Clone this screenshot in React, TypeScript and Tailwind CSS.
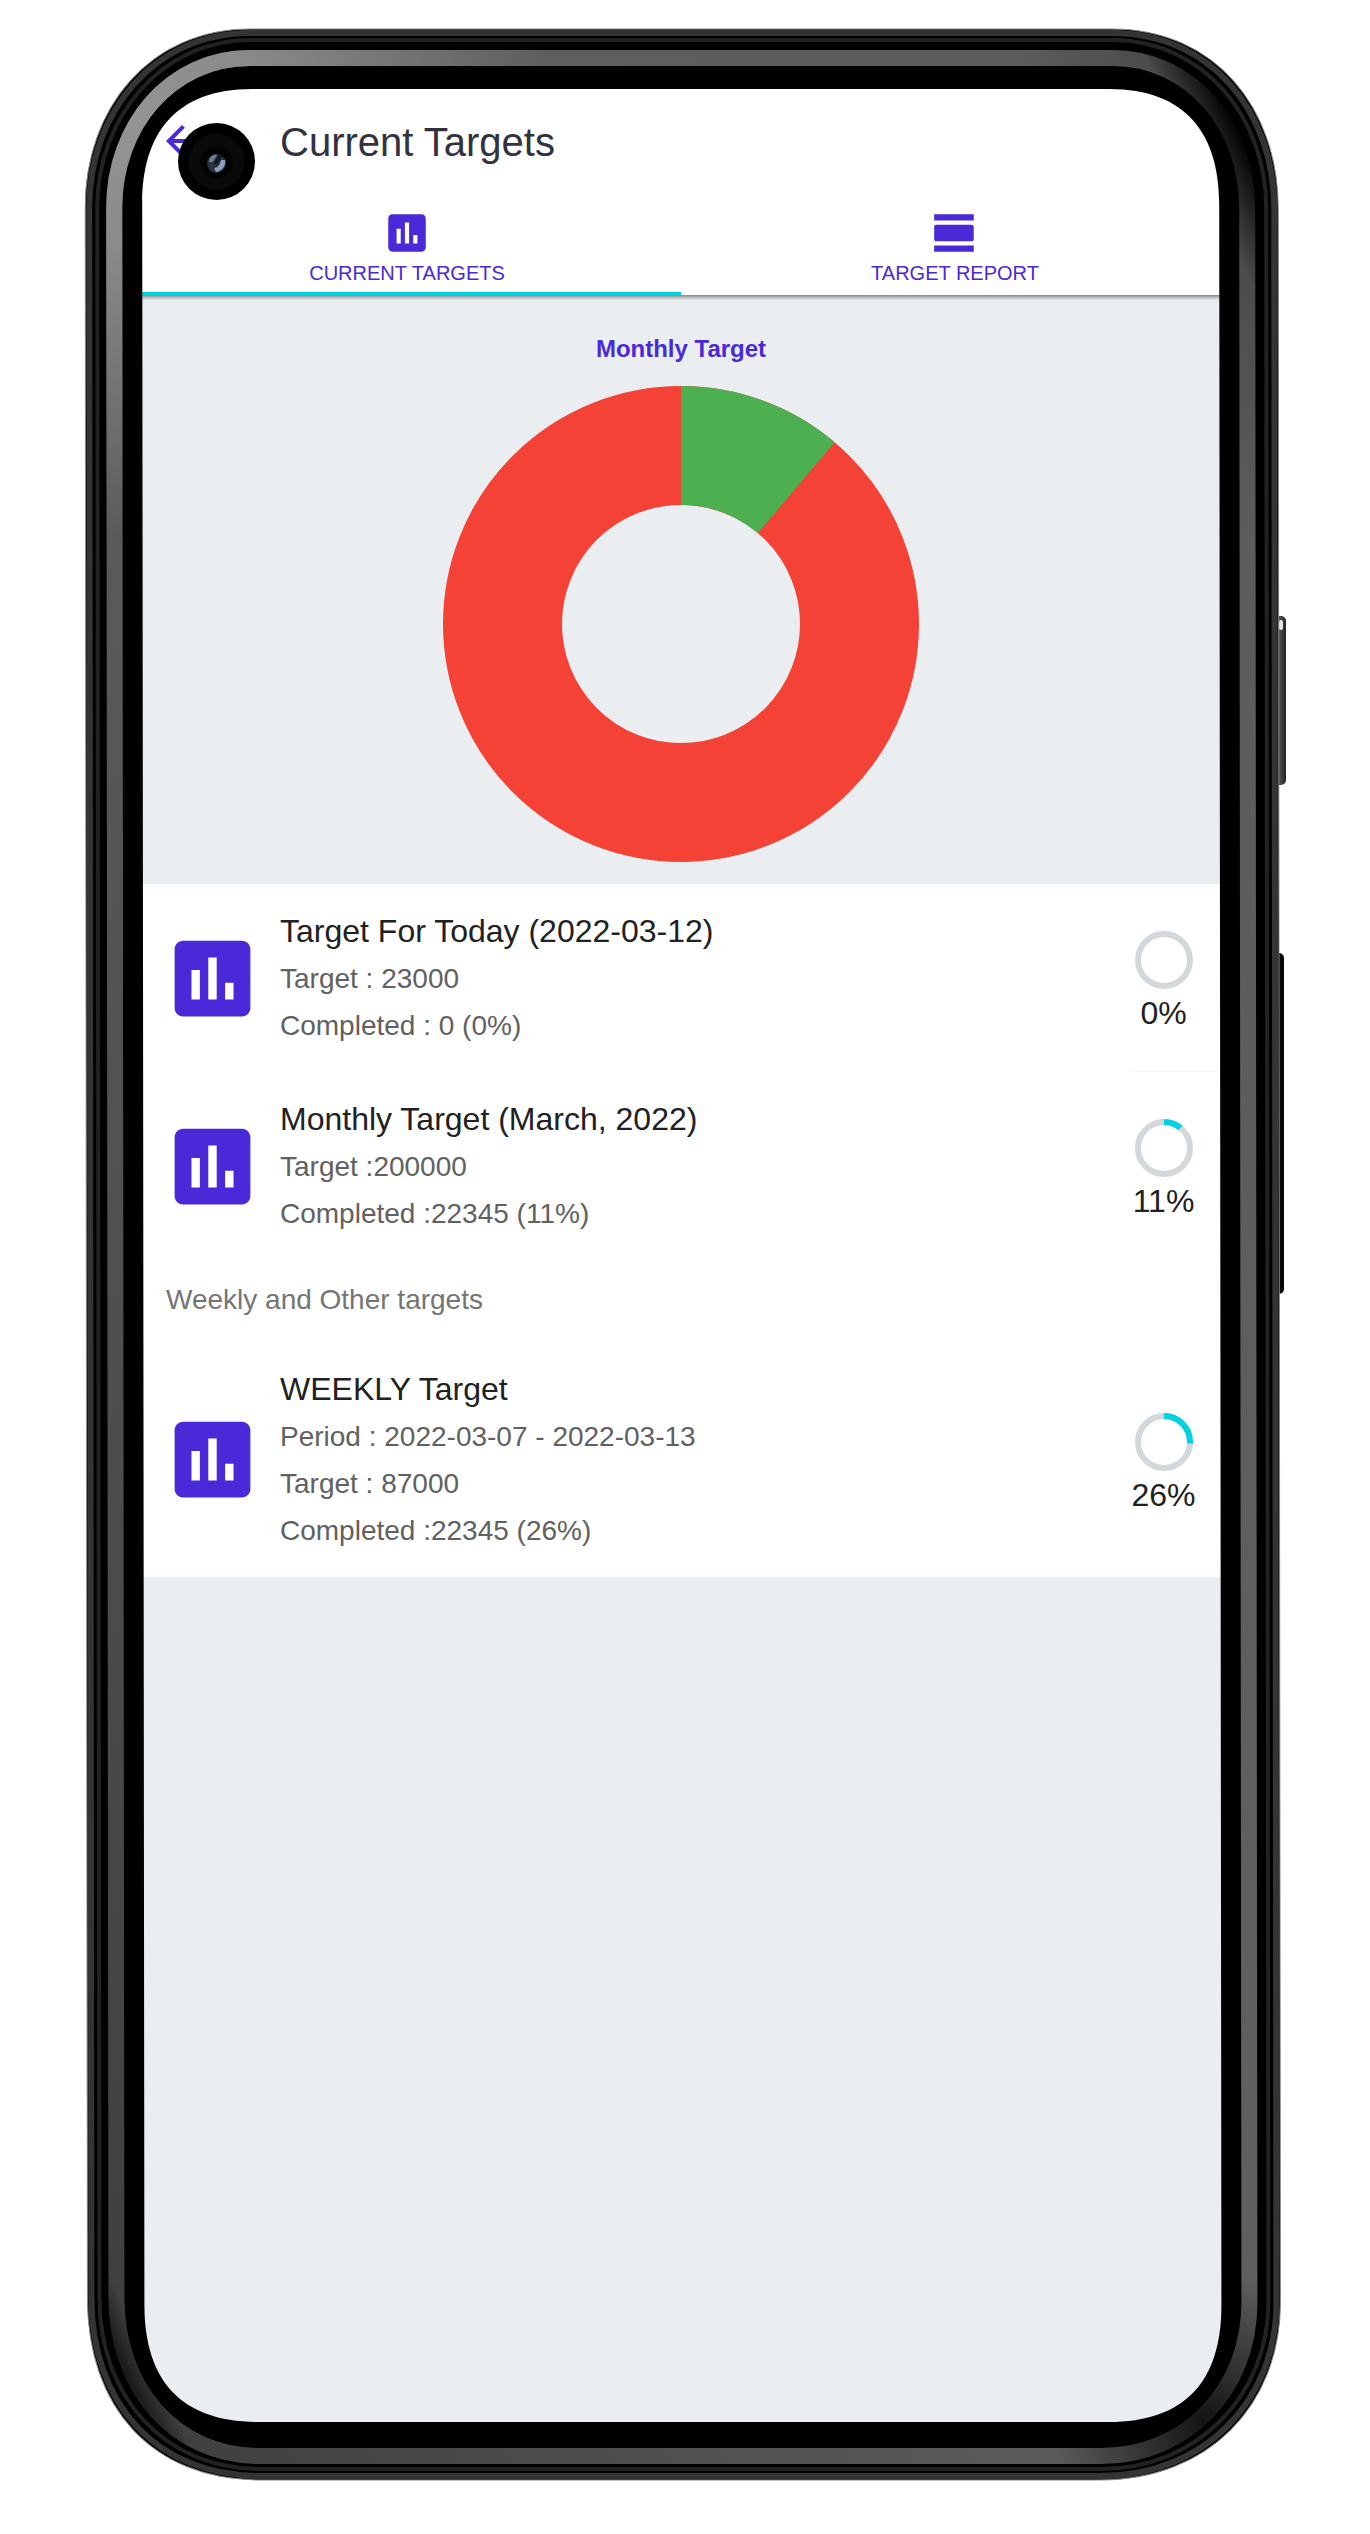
import React from "react";
import { MdArrowBack, MdInsertChart, MdViewDay } from "react-icons/md";

type Target = { title: string; lines: string[]; percent: number; divider?: boolean };

const dailyAndMonthly: Target[] = [
  {
    title: "Target For Today (2022-03-12)",
    lines: ["Target : 23000", "Completed : 0 (0%)"],
    percent: 0,
    divider: true,
  },
  {
    title: "Monthly Target (March, 2022)",
    lines: ["Target :200000", "Completed :22345 (11%)"],
    percent: 11,
  },
];

const weekly: Target[] = [
  {
    title: "WEEKLY Target",
    lines: ["Period : 2022-03-07 - 2022-03-13", "Target : 87000", "Completed :22345 (26%)"],
    percent: 26,
  },
];

function Ring({ percent }: { percent: number }) {
  return (
    <svg className="size-[58px]" viewBox="0 0 58 58" fill="none" strokeWidth="6" aria-hidden="true">
      <circle cx="29" cy="29" r="26" stroke="#d3d8dc" />
      {percent > 0 && (
        <circle
          cx="29"
          cy="29"
          r="26"
          stroke="#00d3e0"
          pathLength={100}
          strokeDasharray={`${percent} 100`}
          transform="rotate(-90 29 29)"
        />
      )}
    </svg>
  );
}

function TargetRow({ title, lines, percent, divider }: Target) {
  return (
    <li className="flex items-center pl-[29px]">
      <MdInsertChart className="size-[101px] shrink-0 text-[#4929d8]" aria-hidden="true" />
      <div className="min-w-0 flex-1 pt-6 pb-[23px] pl-[17px] leading-[47px]">
        <h2 className="text-[32px] text-[#212121]">{title}</h2>
        {lines.map((line) => (
          <p key={line} className="text-[28px] text-[#616161]">
            {line}
          </p>
        ))}
      </div>
      <div
        className={
          divider
            ? "flex w-[97px] shrink-0 items-center self-stretch border-b border-[#f3f4f5] pr-[34px]"
            : "flex w-[97px] shrink-0 items-center self-stretch pr-[34px]"
        }
      >
        <div className="flex w-full flex-col items-center pt-3">
          <Ring percent={percent} />
          <span className="text-[32px] leading-[48px] text-[#212121]">{percent}%</span>
        </div>
      </div>
    </li>
  );
}

function Donut() {
  return (
    <svg className="mt-[22px] size-[476px]" viewBox="0 0 476 476" role="img" aria-label="Monthly target, 11% completed">
      <circle cx="238" cy="238" r="178.5" fill="none" stroke="#f44336" strokeWidth="119" />
      <circle
        cx="238"
        cy="238"
        r="178.5"
        fill="none"
        stroke="#4caf50"
        strokeWidth="119"
        pathLength={100}
        strokeDasharray="11.17 100"
        transform="rotate(-90 238 238)"
      />
    </svg>
  );
}

/* Phone body: metal rim, glass reflection, bezel and side buttons around the display. */
function PhoneFrame() {
  return (
    <svg
      className="pointer-events-none absolute inset-0 h-full w-full"
      viewBox="0 0 1370 2534"
      preserveAspectRatio="none"
      aria-hidden="true"
    >
      <defs>
        <linearGradient id="band" x1="1" y1="0" x2="0" y2="1">
          <stop offset="0.018" stopColor="#000" />
          <stop offset="0.045" stopColor="#4c4c4c" />
          <stop offset="0.1" stopColor="#5c5c5c" />
          <stop offset="0.5" stopColor="#606060" />
          <stop offset="0.75" stopColor="#505050" />
          <stop offset="0.965" stopColor="#404040" />
          <stop offset="0.988" stopColor="#000" />
        </linearGradient>
        <radialGradient id="glow" gradientUnits="userSpaceOnUse" cx="130" cy="120" r="420">
          <stop offset="0" stopColor="#949494" />
          <stop offset="0.3" stopColor="#8a8a8a" />
          <stop offset="1" stopColor="#8a8a8a" stopOpacity="0" />
        </radialGradient>
        <radialGradient id="dim" gradientUnits="userSpaceOnUse" cx="1200" cy="2420" r="150">
          <stop offset="0" stopColor="#000" stopOpacity="0.8" />
          <stop offset="1" stopColor="#000" stopOpacity="0" />
        </radialGradient>
        <linearGradient id="power" x1="0" x2="1">
          <stop offset="0" stopColor="#222" />
          <stop offset="0.4" stopColor="#555" />
          <stop offset="1" stopColor="#222" />
        </linearGradient>
      </defs>
      <rect x="1274" y="616" width="12" height="169" rx="5" fill="url(#power)" />
      <rect x="1279" y="620" width="4" height="10" rx="2" fill="#dfe6ea" />
      <rect x="1274" y="953" width="10" height="341" rx="5" fill="#070707" />
      <g transform="skewX(0.06)" fill="none">
        <path
          fill="#000"
          fillRule="evenodd"
          d="M250 29H1112C1215 29 1278 108 1278 208V2302C1278 2406 1205 2480 1098 2480H258C150 2480 85 2408 85 2298V208C85 108 150 29 250 29ZM252 89C175 89 142 134 142 204V2305C142 2382 180 2422 256 2422H1106C1182 2422 1219 2382 1219 2305V204C1219 134 1186 89 1109 89Z"
        />
        <path
          stroke="#343434"
          strokeWidth="6"
          d="M250 33H1112C1211 33 1274 112 1274 208V2302C1274 2402 1201 2476 1098 2476H258C154 2476 89 2404 89 2298V208C89 112 154 33 250 33Z"
        />
        <path
          stroke="#8a8a86"
          strokeWidth="1"
          d="M250 29H1112C1215 29 1278 108 1278 208V2302C1278 2406 1205 2480 1098 2480H258C150 2480 85 2408 85 2298V208C85 108 150 29 250 29Z"
        />
        <path
          stroke="#222222"
          strokeWidth="4"
          d="M250 40H1112C1204 40 1266 118 1266 208V2302C1266 2394 1196 2469 1098 2469H258C161 2469 97 2396 97 2298V208C97 118 161 40 250 40Z"
        />
        <path
          stroke="url(#band)"
          strokeWidth="16"
          d="M250 58H1112C1192 58 1247 126 1247 208V2302C1247 2390 1184 2456 1098 2456H258C170 2456 114 2386 114 2298V208C114 126 170 58 250 58Z"
        />
        <path
          stroke="url(#glow)"
          strokeWidth="16"
          d="M250 58H1112C1192 58 1247 126 1247 208V2302C1247 2390 1184 2456 1098 2456H258C170 2456 114 2386 114 2298V208C114 126 170 58 250 58Z"
        />
        <path stroke="url(#dim)" strokeWidth="17" d="M1247 2200V2302C1247 2390 1184 2456 1098 2456H1000" />
      </g>
    </svg>
  );
}

function Camera() {
  return (
    <svg className="absolute top-[123px] left-[178px] size-[77px]" viewBox="0 0 77 77" aria-hidden="true">
      <circle cx="38.5" cy="38.5" r="38.5" fill="#000" />
      <circle cx="38.5" cy="38.5" r="28" fill="#0a0a0a" />
      <circle cx="38.5" cy="39.5" r="16" fill="#030303" />
      <circle cx="38.5" cy="40.5" r="9.5" fill="#2b3240" />
      <path d="M31 39c0-5 4-8 8-7l-4 7z" fill="#6d7c96" />
      <path d="M47 37c1 6-3 11-9 12l-2-4c4 0 6-3 7-8z" fill="#8fa0bd" />
      <path d="M43 32l-6 9" stroke="#15181f" strokeWidth="4" />
    </svg>
  );
}

export default function App() {
  return (
    <div className="relative flex min-h-screen flex-col bg-white pt-[85px] pr-[141px] pb-[108px] pl-[133px] font-['Liberation_Sans',Arial,sans-serif]">
      <main className="flex flex-1 flex-col bg-[#eaeef1]">
        <header className="relative bg-white shadow-[0_1px_4px_1px_rgba(0,0,0,0.5)]">
          <div className="flex h-[107px] items-center pt-1 pl-[25px]">
            <button type="button" aria-label="Back" className="text-[#4929d8]">
              <MdArrowBack className="size-12" />
            </button>
            <h1 className="pt-[2px] pl-[74px] text-[40px] leading-[46px] text-[#32323e]">Current Targets</h1>
          </div>
          <nav className="grid grid-cols-2 text-[20px] leading-6 text-[#4929d8]">
            <button
              type="button"
              aria-current="page"
              className="flex flex-col items-center gap-[3px] border-b-[3px] border-[#00d3e0] pt-4 pb-[7px]"
            >
              <MdInsertChart className="size-[50px]" aria-hidden="true" />
              CURRENT TARGETS
            </button>
            <button
              type="button"
              className="flex flex-col items-center gap-[3px] border-b-[3px] border-transparent pt-4 pb-[7px]"
            >
              <MdViewDay className="size-[50px]" aria-hidden="true" />
              TARGET REPORT
            </button>
          </nav>
        </header>

        <section className="flex flex-col items-center pt-[39px] pb-[22px]">
          <h2 className="text-[24px] leading-[30px] font-bold text-[#4929d8]">Monthly Target</h2>
          <Donut />
        </section>

        <section className="bg-white">
          <ul>
            {dailyAndMonthly.map((target) => (
              <TargetRow key={target.title} {...target} />
            ))}
          </ul>
          <h2 className="pt-[22px] pb-6 pl-[33px] text-[28px] leading-9 text-[#757575]">Weekly and Other targets</h2>
          <ul>
            {weekly.map((target) => (
              <TargetRow key={target.title} {...target} />
            ))}
          </ul>
        </section>
      </main>
      <PhoneFrame />
      <Camera />
    </div>
  );
}
